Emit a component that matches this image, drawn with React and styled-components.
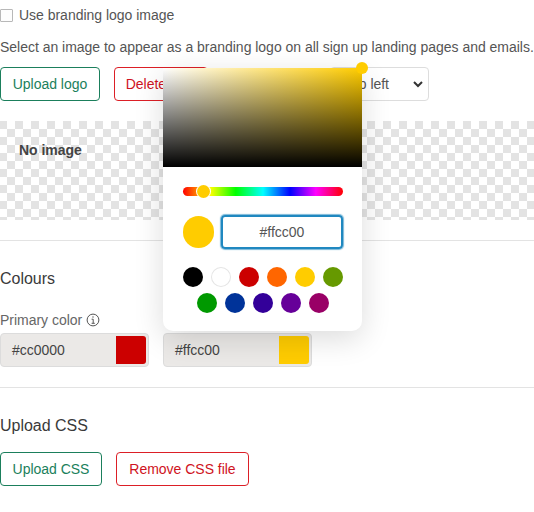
import React from "react";
import styled, { createGlobalStyle } from "styled-components";

const Global = createGlobalStyle`
  html, body { margin: 0; padding: 0; background: #fff; }
  body { font-family: "Liberation Sans", Arial, sans-serif; font-size: 14px; color: #555; letter-spacing: -0.02px; }
  * { box-sizing: border-box; }
`;

const Page = styled.div`
  position: relative;
  width: 534px;
  height: 512px;
  overflow: hidden;
  padding-top: 7px;
`;

const CheckRow = styled.label`
  display: flex;
  align-items: center;
  gap: 6px;
  height: 16px;
`;

const Box = styled.span`
  width: 13px;
  height: 13px;
  border: 1.5px solid #b8b8b8;
  border-radius: 1px;
  background: #fdfdfd;
`;

const Para = styled.p`
  margin: 16px 0 0;
  line-height: 16px;
  white-space: nowrap;
  color: #555;
`;

const Row = styled.div`
  display: flex;
  align-items: center;
  gap: 14px;
  margin-top: ${(p) => p.$top || 0}px;
`;

const Button = styled.button`
  width: ${(p) => p.$w}px;
  height: 34px;
  padding: 0;
  background: #fff;
  font: 14px "Liberation Sans", Arial, sans-serif;
  letter-spacing: -0.02px;
  border-radius: 4px;
  border: 1px solid ${(p) => (p.$danger ? "#dc1f26" : "#1b7f5c")};
  color: ${(p) => (p.$danger ? "#cf1322" : "#1b7f5c")};
  white-space: nowrap;
`;

const FakeSelect = styled.div`
  margin-left: 108px;
  width: 99px;
  height: 34px;
  border: 1px solid #ddd;
  border-radius: 4px;
  display: flex;
  align-items: center;
  justify-content: flex-end;
  gap: 24px;
  padding: 0 5px 0 0;
  color: #555;
`;

const Chevron = () => (
  <svg width="10" height="7" viewBox="0 0 10 7" fill="none" stroke="#333" strokeWidth="2">
    <path d="M1 1l4 4 4-4" />
  </svg>
);

const Checker = styled.div`
  margin-top: 20px;
  height: 99px;
  padding: 21px 19px;
  font-weight: 700;
  line-height: 16px;
  color: #444;
  background: repeating-conic-gradient(#e3e3e3 0 25%, #fff 0 50%) 7px 0 / 16px 16px;
`;

const Rule = styled.hr`
  margin: ${(p) => p.$top}px 0 0;
  border: 0;
  border-top: 1px solid #e3e3e3;
`;

const Heading = styled.h3`
  margin: ${(p) => p.$top}px 0 0;
  font-size: 16px;
  font-weight: 400;
  line-height: 20px;
  color: #3a3a3a;
`;

const Label = styled.div`
  margin-top: 23px;
  display: flex;
  align-items: center;
  gap: 4px;
  height: 16px;
  color: #666;
`;

const Info = () => (
  <svg width="14" height="14" viewBox="0 0 14 14" fill="none" stroke="#555">
    <circle cx="7" cy="7" r="5.9" />
    <path d="M5.6 6.2H7.2V10.2M5.6 10.3H8.8" />
    <circle cx="7" cy="4" r=".7" fill="#555" stroke="none" />
  </svg>
);

const ColorField = styled.div`
  width: 149px;
  height: 34px;
  display: flex;
  align-items: center;
  justify-content: space-between;
  padding: 2px 2px 2px 11px;
  background: #ebe9e7;
  border: 1px solid #dcdcdc;
  border-radius: 4px;
  color: #444;
`;

const FieldSwatch = styled.span`
  width: 30px;
  height: 28px;
  border-radius: 0 3px 3px 0;
  background: ${(p) => p.$color};
`;

const Popover = styled.div`
  position: absolute;
  left: 163px;
  top: 68px;
  width: 199px;
  height: 263px;
  background: #fff;
  border-radius: 0 0 10px 10px;
  box-shadow: 0 8px 30px rgba(0, 0, 0, 0.14);
`;

const Saturation = styled.div`
  position: relative;
  height: 99px;
  background:
    linear-gradient(to top, #000, transparent),
    linear-gradient(to right, #fff, #ffcc00);
`;

const SatHandle = styled.span`
  position: absolute;
  right: -6px;
  top: -6px;
  width: 12px;
  height: 12px;
  border-radius: 50%;
  background: #ffcc00;
`;

const PopBody = styled.div`
  padding: 20px 19.5px 0;
`;

const Hue = styled.div`
  position: relative;
  height: 9px;
  border-radius: 5px;
  background: linear-gradient(to right, #f00 0%, #ff0 17%, #0f0 33%, #0ff 50%, #00f 67%, #f0f 83%, #f00 100%);
`;

const HueThumb = styled.span`
  position: absolute;
  left: 14px;
  top: -2px;
  width: 13px;
  height: 13px;
  border-radius: 50%;
  background: #ffcc00;
  box-shadow: 0 0 0 1px #fff;
`;

const PreviewRow = styled.div`
  margin-top: 19px;
  display: flex;
  align-items: center;
  gap: 7px;
`;

const PreviewDot = styled.span`
  width: 32px;
  height: 32px;
  border-radius: 50%;
  background: #ffcc00;
`;

const HexInput = styled.div`
  width: 122px;
  height: 34px;
  display: flex;
  align-items: center;
  justify-content: center;
  border: 2px solid #2088c0;
  border-radius: 4px;
  box-shadow: 0 0 1px 1px rgba(32, 136, 192, 0.6);
  color: #555;
`;

const Swatches = styled.div`
  margin-top: 18px;
  display: flex;
  flex-wrap: wrap;
  justify-content: center;
  gap: 6px 8px;
`;

const Swatch = styled.span`
  width: 20px;
  height: 20px;
  border-radius: 50%;
  background: ${(p) => p.$color};
  box-shadow: ${(p) => (p.$ring ? "inset 0 0 0 1px #e5e5e5" : "none")};
`;

const colors = ["#000000", "#ffffff", "#cc0000", "#ff6600", "#ffcc00", "#669900", "#009900", "#003399", "#330099", "#660099", "#990066"];

export default function App() {
  return (
    <Page>
      <Global />
      <CheckRow>
        <Box />
        Use branding logo image
      </CheckRow>
      <Para>Select an image to appear as a branding logo on all sign up landing pages and emails.</Para>
      <Row $top={12}>
        <Button $w={100}>Upload logo</Button>
        <Button $danger $w={94}>Delete logo</Button>
        <FakeSelect>
          <span>Top left</span>
          <Chevron />
        </FakeSelect>
      </Row>
      <Checker>No image</Checker>
      <Rule $top={20} />
      <Heading $top={28}>Colours</Heading>
      <Label>
        Primary color <Info />
      </Label>
      <Row $top={5}>
        <ColorField>
          #cc0000
          <FieldSwatch $color="#cc0000" />
        </ColorField>
        <ColorField>
          #ffcc00
          <FieldSwatch $color="#ffcc00" />
        </ColorField>
      </Row>
      <Rule $top={20} />
      <Heading $top={28}>Upload CSS</Heading>
      <Row $top={16}>
        <Button $w={102}>Upload CSS</Button>
        <Button $danger $w={133}>Remove CSS file</Button>
      </Row>
      <Popover>
        <Saturation>
          <SatHandle />
        </Saturation>
        <PopBody>
          <Hue>
            <HueThumb />
          </Hue>
          <PreviewRow>
            <PreviewDot />
            <HexInput>#ffcc00</HexInput>
          </PreviewRow>
          <Swatches>
            {colors.map((c) => (
              <Swatch key={c} $color={c} $ring={c === "#ffffff"} />
            ))}
          </Swatches>
        </PopBody>
      </Popover>
    </Page>
  );
}
